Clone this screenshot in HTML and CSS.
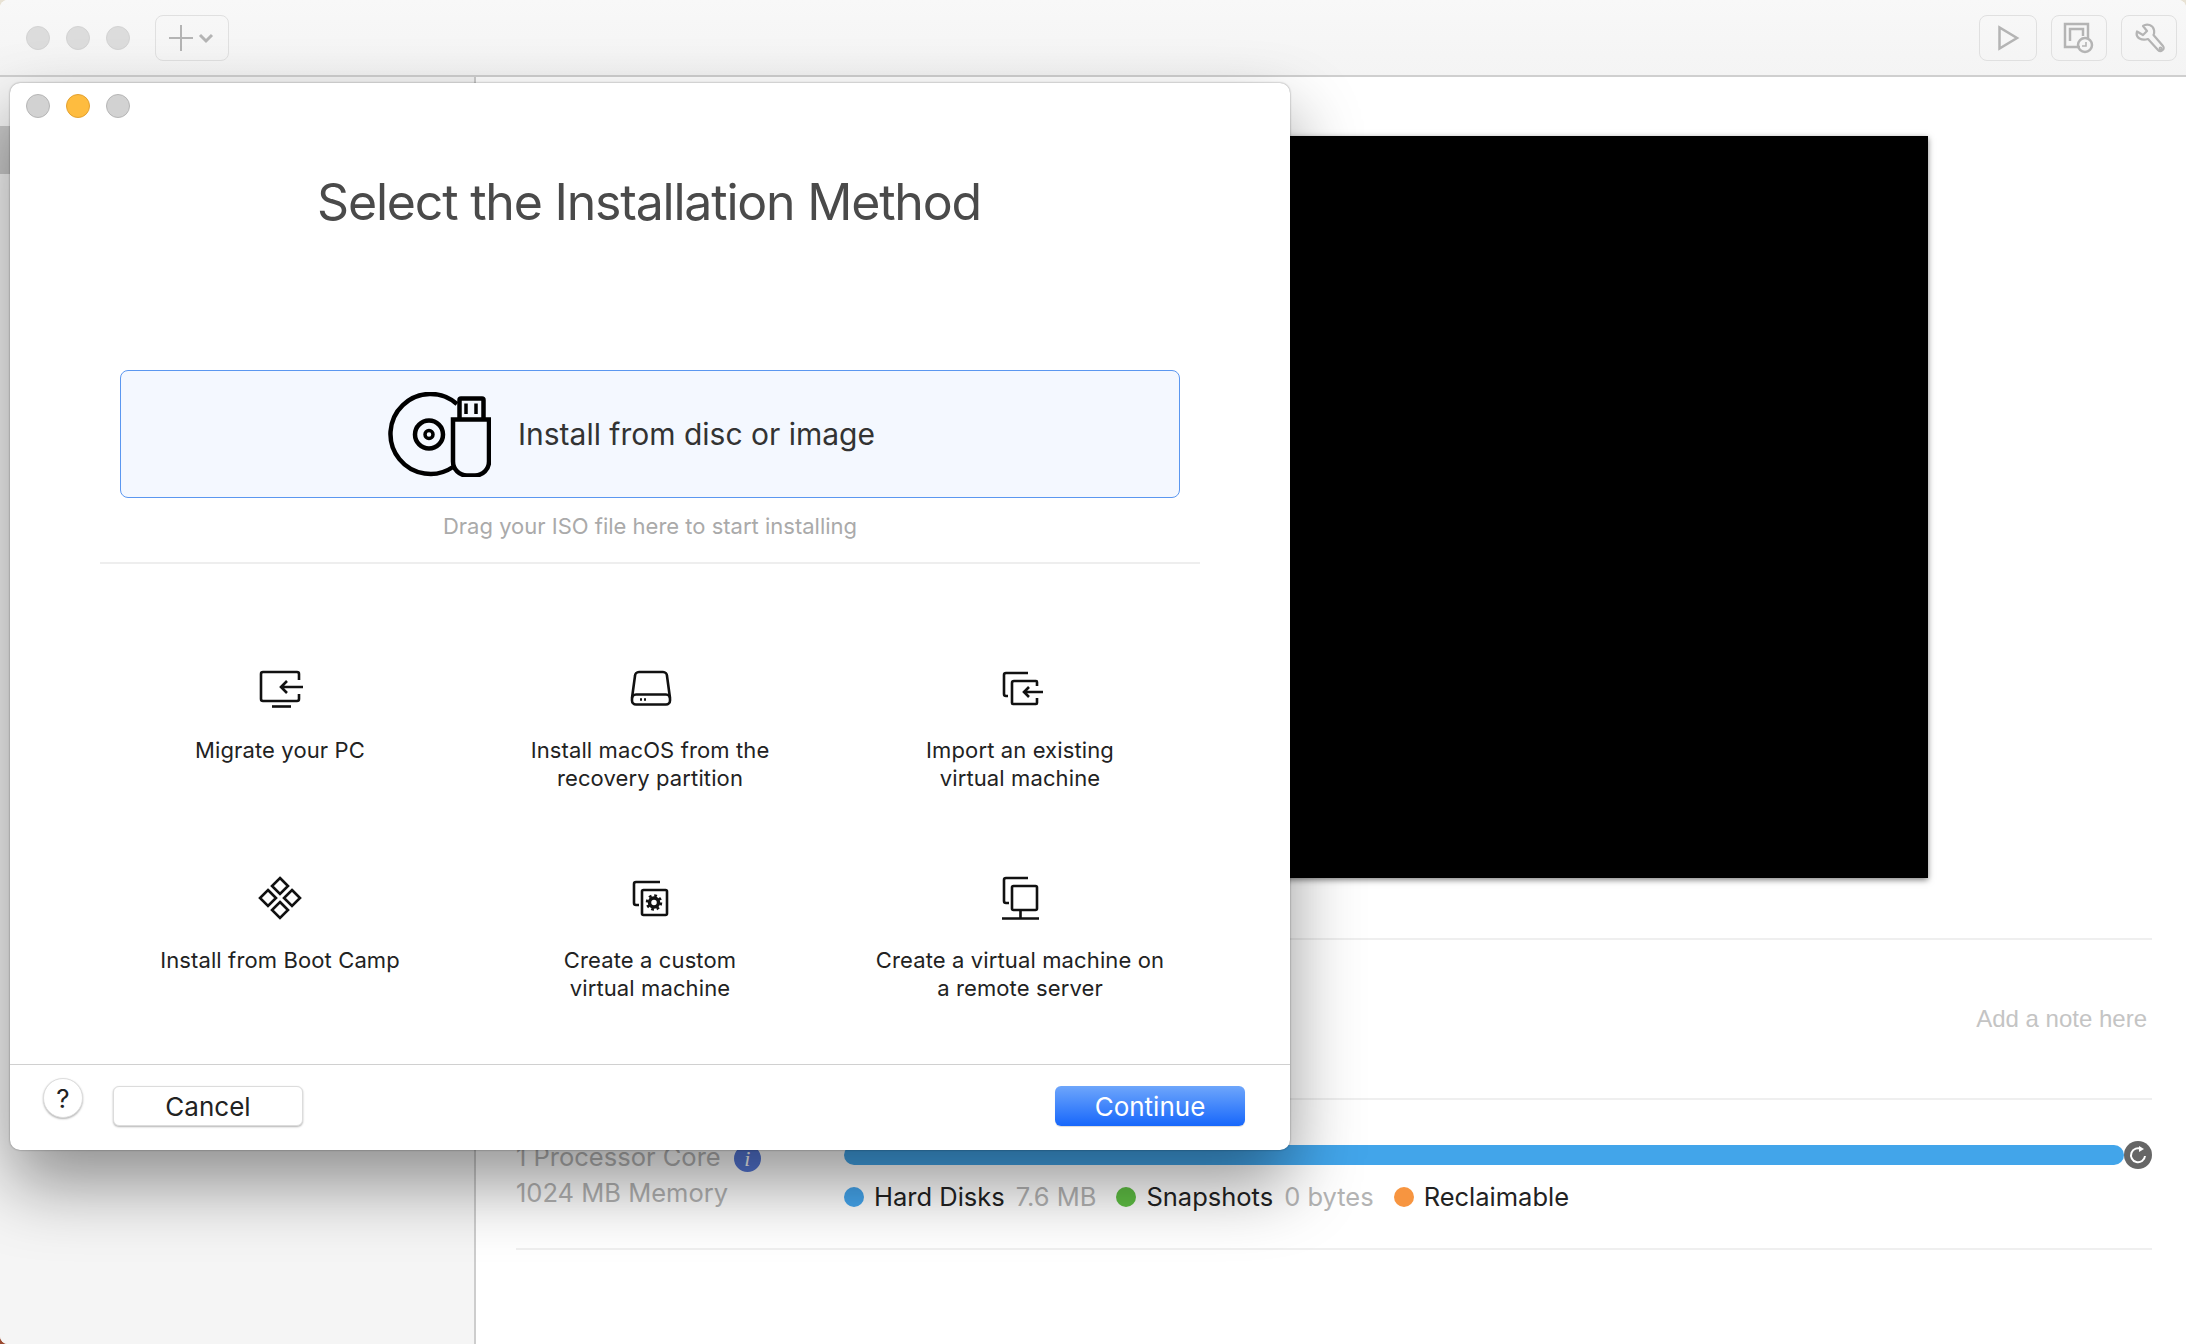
FILE: index.html
```html
<!DOCTYPE html>
<html lang="en">
<head>
    <meta charset="UTF-8">
    <title>Select the Installation Method</title>
    <link rel="stylesheet" href="styles.css">
</head>
<body>

    <div class="window">
        <div class="toolbar">
            <div class="lights">
                <span class="light"></span>
                <span class="light"></span>
                <span class="light"></span>
            </div>
            <div class="tool tool-add">
                <svg width="48" height="28" viewBox="0 0 48 28" fill="none" stroke="#b4b4b4">
                    <path d="M13 1V27M1 14H25" stroke-width="2"/>
                    <path d="M32 11l6 6 6-6" stroke-width="3"/>
                </svg>
            </div>
            <div class="tool-right">
                <div class="tool tool-play">
                    <svg width="24" height="26" viewBox="0 0 24 26" fill="none" stroke="#b4b4b4" stroke-width="2.5">
                        <path d="M3.500 2.500V23.500L21 13Z"/>
                    </svg>
                </div>
                <div class="tool tool-small">
                    <svg width="32" height="32" viewBox="0 0 32 32" fill="none" stroke="#b4b4b4" stroke-width="2.5">
                        <path d="M17 25H2V2H25V16"/>
                        <path d="M7 19V7H20V14"/>
                        <circle cx="22" cy="23" r="7"/>
                        <path d="M19 24H23V20" stroke-width="1.600"/>
                    </svg>
                </div>
                <div class="tool tool-small">
                    <svg width="32" height="32" viewBox="0 0 32 32" fill="none" stroke="#b4b4b4" stroke-width="2.2" stroke-linejoin="round">
                        <path d="M4 9.500L10 13L14 9L10 4C14 1 20 3 21 8C21.500 11 21 12 20.500 13L30 24C32 27 28 31 25 28L15 17C9 19 2 16 4 9.500Z"/>
                        <circle cx="27.500" cy="26.500" r="0.800"/>
                    </svg>
                </div>
            </div>
        </div>

        <div class="content">
            <div class="sidebar">
                <div class="sidebar-item"></div>
            </div>
            <div class="main">
                <div class="preview"></div>
                <div class="note">Add a note here</div>
                <div class="stats">
                    <div class="specs">
                        <div>1 Processor Core <span class="info">i</span></div>
                        <div>1024 MB Memory</div>
                    </div>
                    <div class="usage">
                        <div class="meter">
                            <div class="meter-bar"></div>
                            <div class="refresh">
                                <svg width="20" height="20" viewBox="0 0 20 20" fill="none" stroke="#fff" stroke-width="2">
                                    <path d="M13.500 4.200A7 7 0 1 0 17 11"/>
                                    <path d="M11 1l5 3-5 3z" fill="#fff" stroke="none"/>
                                </svg>
                            </div>
                        </div>
                        <div class="legend">
                            <span class="dot dot-blue"></span><span class="legend-name">Hard Disks</span><span class="legend-value">7.6 MB</span>
                            <span class="dot dot-green"></span><span class="legend-name">Snapshots</span><span class="legend-value">0 bytes</span>
                            <span class="dot dot-orange"></span><span class="legend-name">Reclaimable</span>
                        </div>
                    </div>
                </div>
            </div>
        </div>
    </div>

    <div class="dialog">
        <div class="lights dialog-lights">
            <span class="light"></span>
            <span class="light light-min"></span>
            <span class="light"></span>
        </div>

        <h1 class="title">Select the Installation Method</h1>

        <div class="dropzone">
            <svg width="104" height="85" viewBox="0 0 104 85" fill="none" stroke="#000" stroke-width="4.500">
                <path d="M70 12A40 40 0 1 0 66 75"/>
                <circle cx="42" cy="42.500" r="14"/>
                <circle cx="42" cy="42.500" r="4" stroke-width="3.500"/>
                <path d="M66 27.500H102V69.500A14 14 0 0 1 88 83.500H80A14 14 0 0 1 66 69.500Z"/>
                <path d="M72.500 27V8a1.500 1.500 0 0 1 1.500-1.500H95a1.500 1.500 0 0 1 1.500 1.500V27"/>
                <path d="M79 11.500V22M89 11.500V22" stroke-width="3.500"/>
            </svg>
            <span class="dropzone-text">Install from disc or image</span>
        </div>
        <div class="hint">Drag your ISO file here to start installing</div>
        <div class="rule"></div>

        <div class="methods">
            <div class="method">
                <svg class="method-icon" viewBox="0 0 48 48">
                    <path d="M43 14V8a2 2 0 0 0-2-2H7a2 2 0 0 0-2 2V33a2 2 0 0 0 2 2H41a2 2 0 0 0 2-2V28"/>
                    <path d="M16 40.500H35"/>
                    <path d="M47 21H25M31 15l-6 6 6 6"/>
                </svg>
                <div>Migrate your PC</div>
            </div>
            <div class="method">
                <svg class="method-icon" viewBox="0 0 48 48">
                    <path d="M6 32L9 10a4 4 0 0 1 4-4H37a4 4 0 0 1 4 4L44 32"/>
                    <rect x="6" y="28.500" width="38" height="10" rx="4"/>
                    <path d="M14 33.500h2M18 33.500h2"/>
                </svg>
                <div>Install macOS from the<br>recovery partition</div>
            </div>
            <div class="method">
                <svg class="method-icon" viewBox="0 0 48 48">
                    <path d="M32 7H10a2 2 0 0 0-2 2V28a2 2 0 0 0 2 2h2"/>
                    <path d="M41 20V16a1 1 0 0 0-1-1H18a2 2 0 0 0-2 2V37a1 1 0 0 0 1 1H40a1 1 0 0 0 1-1V32"/>
                    <path d="M47 26H28M33 21l-5 5 5 5"/>
                </svg>
                <div>Import an existing<br>virtual machine</div>
            </div>
            <div class="method">
                <svg class="method-icon" viewBox="0 0 48 48">
                    <path d="M24 2l8 8-8 8-8-8zM12 14l8 8-8 8-8-8zM36 14l8 8-8 8-8-8zM24 26l8 8-8 8-8-8z"/>
                </svg>
                <div>Install from Boot Camp</div>
            </div>
            <div class="method">
                <svg class="method-icon" viewBox="0 0 48 48">
                    <path d="M34 6H10a2 2 0 0 0-2 2V27a2 2 0 0 0 2 2h3"/>
                    <rect x="16" y="14" width="25" height="25" rx="1.500"/>
                    <circle cx="28" cy="26.500" r="4.500" stroke-width="3.500"/>
                    <circle cx="28" cy="26.500" r="7" stroke-width="2.500" stroke-dasharray="2.750 2.750"/>
                </svg>
                <div>Create a custom<br>virtual machine</div>
            </div>
            <div class="method">
                <svg class="method-icon" viewBox="0 0 48 48">
                    <path d="M32 2H10a2 2 0 0 0-2 2V25a2 2 0 0 0 2 2h3"/>
                    <rect x="16" y="10" width="25" height="24" rx="1.500"/>
                    <path d="M24.500 34V42M6 42.500H43"/>
                </svg>
                <div>Create a virtual machine on<br>a remote server</div>
            </div>
        </div>

        <div class="footer">
            <button class="help">?</button>
            <button class="btn">Cancel</button>
            <button class="btn btn-primary">Continue</button>
        </div>
    </div>

</body>
</html>
```

FILE: styles.css
```css
html, body {
    margin: 0;
    padding: 0;
    height: 100%;
    font-family: Inter, "Noto Sans", sans-serif;
    overflow: hidden;
}
html {
    background: linear-gradient(#e8e2d4 50%, #9a4a30 50%);
}
.window {
    display: flex;
    flex-direction: column;
    height: 1344px;
    background-color: #fff;
    border-radius: 8px 8px 0 8px;
    overflow: hidden;
}
.toolbar {
    display: flex;
    align-items: center;
    flex: 0 0 77px;
    box-sizing: border-box;
    padding: 0 9px 0 26px;
    background: linear-gradient(#f8f8f8, #f4f4f4);
    border-bottom: 2px solid #cfcfcf;
}
.lights {
    display: flex;
    gap: 16px;
}
.light {
    box-sizing: border-box;
    width: 24px;
    height: 24px;
    border-radius: 50%;
    background-color: #dcdcdc;
    border: 1px solid #d3d3d3;
}
.tool {
    box-sizing: border-box;
    display: flex;
    align-items: center;
    justify-content: center;
    height: 46px;
    border: 1px solid #e0e0e0;
    border-radius: 8px;
}
.tool-add {
    width: 74px;
    margin-left: 25px;
}
.tool-right {
    display: flex;
    gap: 14px;
    margin-left: auto;
}
.tool-play {
    width: 58px;
}
.tool-small {
    width: 56px;
}
.content {
    display: flex;
    flex: 1;
    min-height: 0;
}
.sidebar {
    box-sizing: border-box;
    width: 476px;
    padding-top: 49px;
    background-color: #f5f5f5;
    border-right: 2px solid #cdcdcd;
}
.sidebar-item {
    height: 48px;
    background-color: #c9c9c9;
}
.main {
    flex: 1;
    min-width: 0;
    padding: 59px 34px 0 40px;
}
.preview {
    width: 1188px;
    height: 742px;
    margin: 0 auto;
    background-color: #000;
    box-shadow: 0 2px 6px rgba(0, 0, 0, 0.5);
}
.note {
    display: flex;
    align-items: center;
    justify-content: flex-end;
    height: 158px;
    margin-top: 60px;
    padding-right: 5px;
    border-top: 2px solid #efefef;
    font-family: "Liberation Sans", Arial, sans-serif;
    font-size: 24px;
    color: #c4c4c4;
}
.stats {
    display: flex;
    box-sizing: border-box;
    height: 152px;
    padding-top: 39px;
    border-top: 2px solid #efefef;
    border-bottom: 2px solid #efefef;
}
.specs {
    width: 328px;
    flex: none;
    font-size: 25.5px;
    line-height: 36px;
    color: #b4b4b4;
}
.info {
    display: inline-block;
    width: 27px;
    height: 27px;
    margin-left: 6px;
    border-radius: 50%;
    background-color: #5578d8;
    color: #fff;
    font-family: "Liberation Serif", serif;
    font-style: italic;
    font-size: 22px;
    line-height: 27px;
    text-align: center;
    vertical-align: 0;
}
.usage {
    flex: 1;
    padding-top: 2px;
}
.meter {
    display: flex;
    align-items: center;
}
.meter-bar {
    flex: 1;
    height: 20px;
    border-radius: 10px;
    background-color: #42a5ea;
}
.refresh {
    display: flex;
    align-items: center;
    justify-content: center;
    width: 28px;
    height: 28px;
    border-radius: 50%;
    background-color: #666;
}
.legend {
    display: flex;
    align-items: center;
    margin-top: 10px;
    font-size: 25.5px;
    line-height: 36px;
    color: #222;
}
.dot {
    width: 20px;
    height: 20px;
    margin-right: 10px;
    border-radius: 50%;
}
.dot-blue {
    background-color: #45a6ee;
}
.dot-green {
    background-color: #5fbf44;
}
.dot-orange {
    background-color: #f79540;
}
.legend-value {
    margin: 0 20px 0 11px;
    color: #b4b4b4;
}

.dialog {
    position: absolute;
    left: 10px;
    top: 83px;
    display: flex;
    flex-direction: column;
    box-sizing: border-box;
    width: 1280px;
    height: 1067px;
    background-color: #fff;
    border-radius: 10px;
    box-shadow: 0 0 2px rgba(0, 0, 0, 0.45), 0 34px 70px rgba(0, 0, 0, 0.42);
}
.dialog-lights {
    padding: 11px 0 0 16px;
}
.dialog-lights .light {
    background-color: #d2d2d2;
    border-color: #b6b6b6;
}
.dialog-lights .light-min {
    background-color: #febc3f;
    border-color: #e3a130;
}
.title {
    margin: 54px 2px 0 0;
    font-size: 50px;
    font-weight: 400;
    letter-spacing: -1.2px;
    line-height: 60px;
    text-align: center;
    color: #4a4a4a;
}
.dropzone {
    display: flex;
    align-items: center;
    justify-content: center;
    gap: 27px;
    box-sizing: border-box;
    height: 128px;
    margin: 138px 110px 0;
    padding-right: 38px;
    background-color: #f4f8ff;
    border: 1px solid #5b97f0;
    border-radius: 8px;
}
.dropzone-text {
    font-size: 30px;
    color: #333;
}
.hint {
    margin-top: 14px;
    font-size: 22px;
    line-height: 28px;
    text-align: center;
    color: #aaa;
}
.rule {
    height: 2px;
    margin: 22px 90px 0;
    background-color: #eee;
}
.methods {
    display: grid;
    grid-template-columns: repeat(3, 370px);
    grid-template-rows: 210px 188px;
    margin: 102px 85px 0;
}
.method {
    display: flex;
    flex-direction: column;
    align-items: center;
    font-size: 22px;
    letter-spacing: 0.12px;
    line-height: 28px;
    text-align: center;
    color: #222;
}
.method-icon {
    width: 48px;
    height: 48px;
    margin-bottom: 22px;
    fill: none;
    stroke: #111;
    stroke-width: 2.6;
    overflow: visible;
}
.footer {
    display: flex;
    align-items: flex-start;
    box-sizing: border-box;
    height: 86px;
    padding: 21px 45px 0 33px;
    border-top: 1px solid #d0d0d0;
}
.help {
    box-sizing: border-box;
    width: 40px;
    height: 40px;
    margin: -8px 30px 0 0;
    padding: 0;
    border: 1px solid #ddd;
    border-radius: 50%;
    background-color: #fff;
    box-shadow: 0 1px 2px rgba(0, 0, 0, 0.3);
    font-family: Inter, sans-serif;
    font-size: 26px;
    color: #222;
}
.btn {
    box-sizing: border-box;
    width: 190px;
    height: 40px;
    padding: 0;
    border: 1px solid #dcdcdc;
    border-radius: 6px;
    background-color: #fff;
    box-shadow: 0 1px 2px rgba(0, 0, 0, 0.3);
    font-family: Inter, sans-serif;
    font-size: 26px;
    color: #222;
}
.btn-primary {
    margin-left: auto;
    border: none;
    background: linear-gradient(#6ea6fb, #1767fb);
    box-shadow: 0 1px 1px rgba(0, 0, 0, 0.15);
    color: #fff;
}
```
